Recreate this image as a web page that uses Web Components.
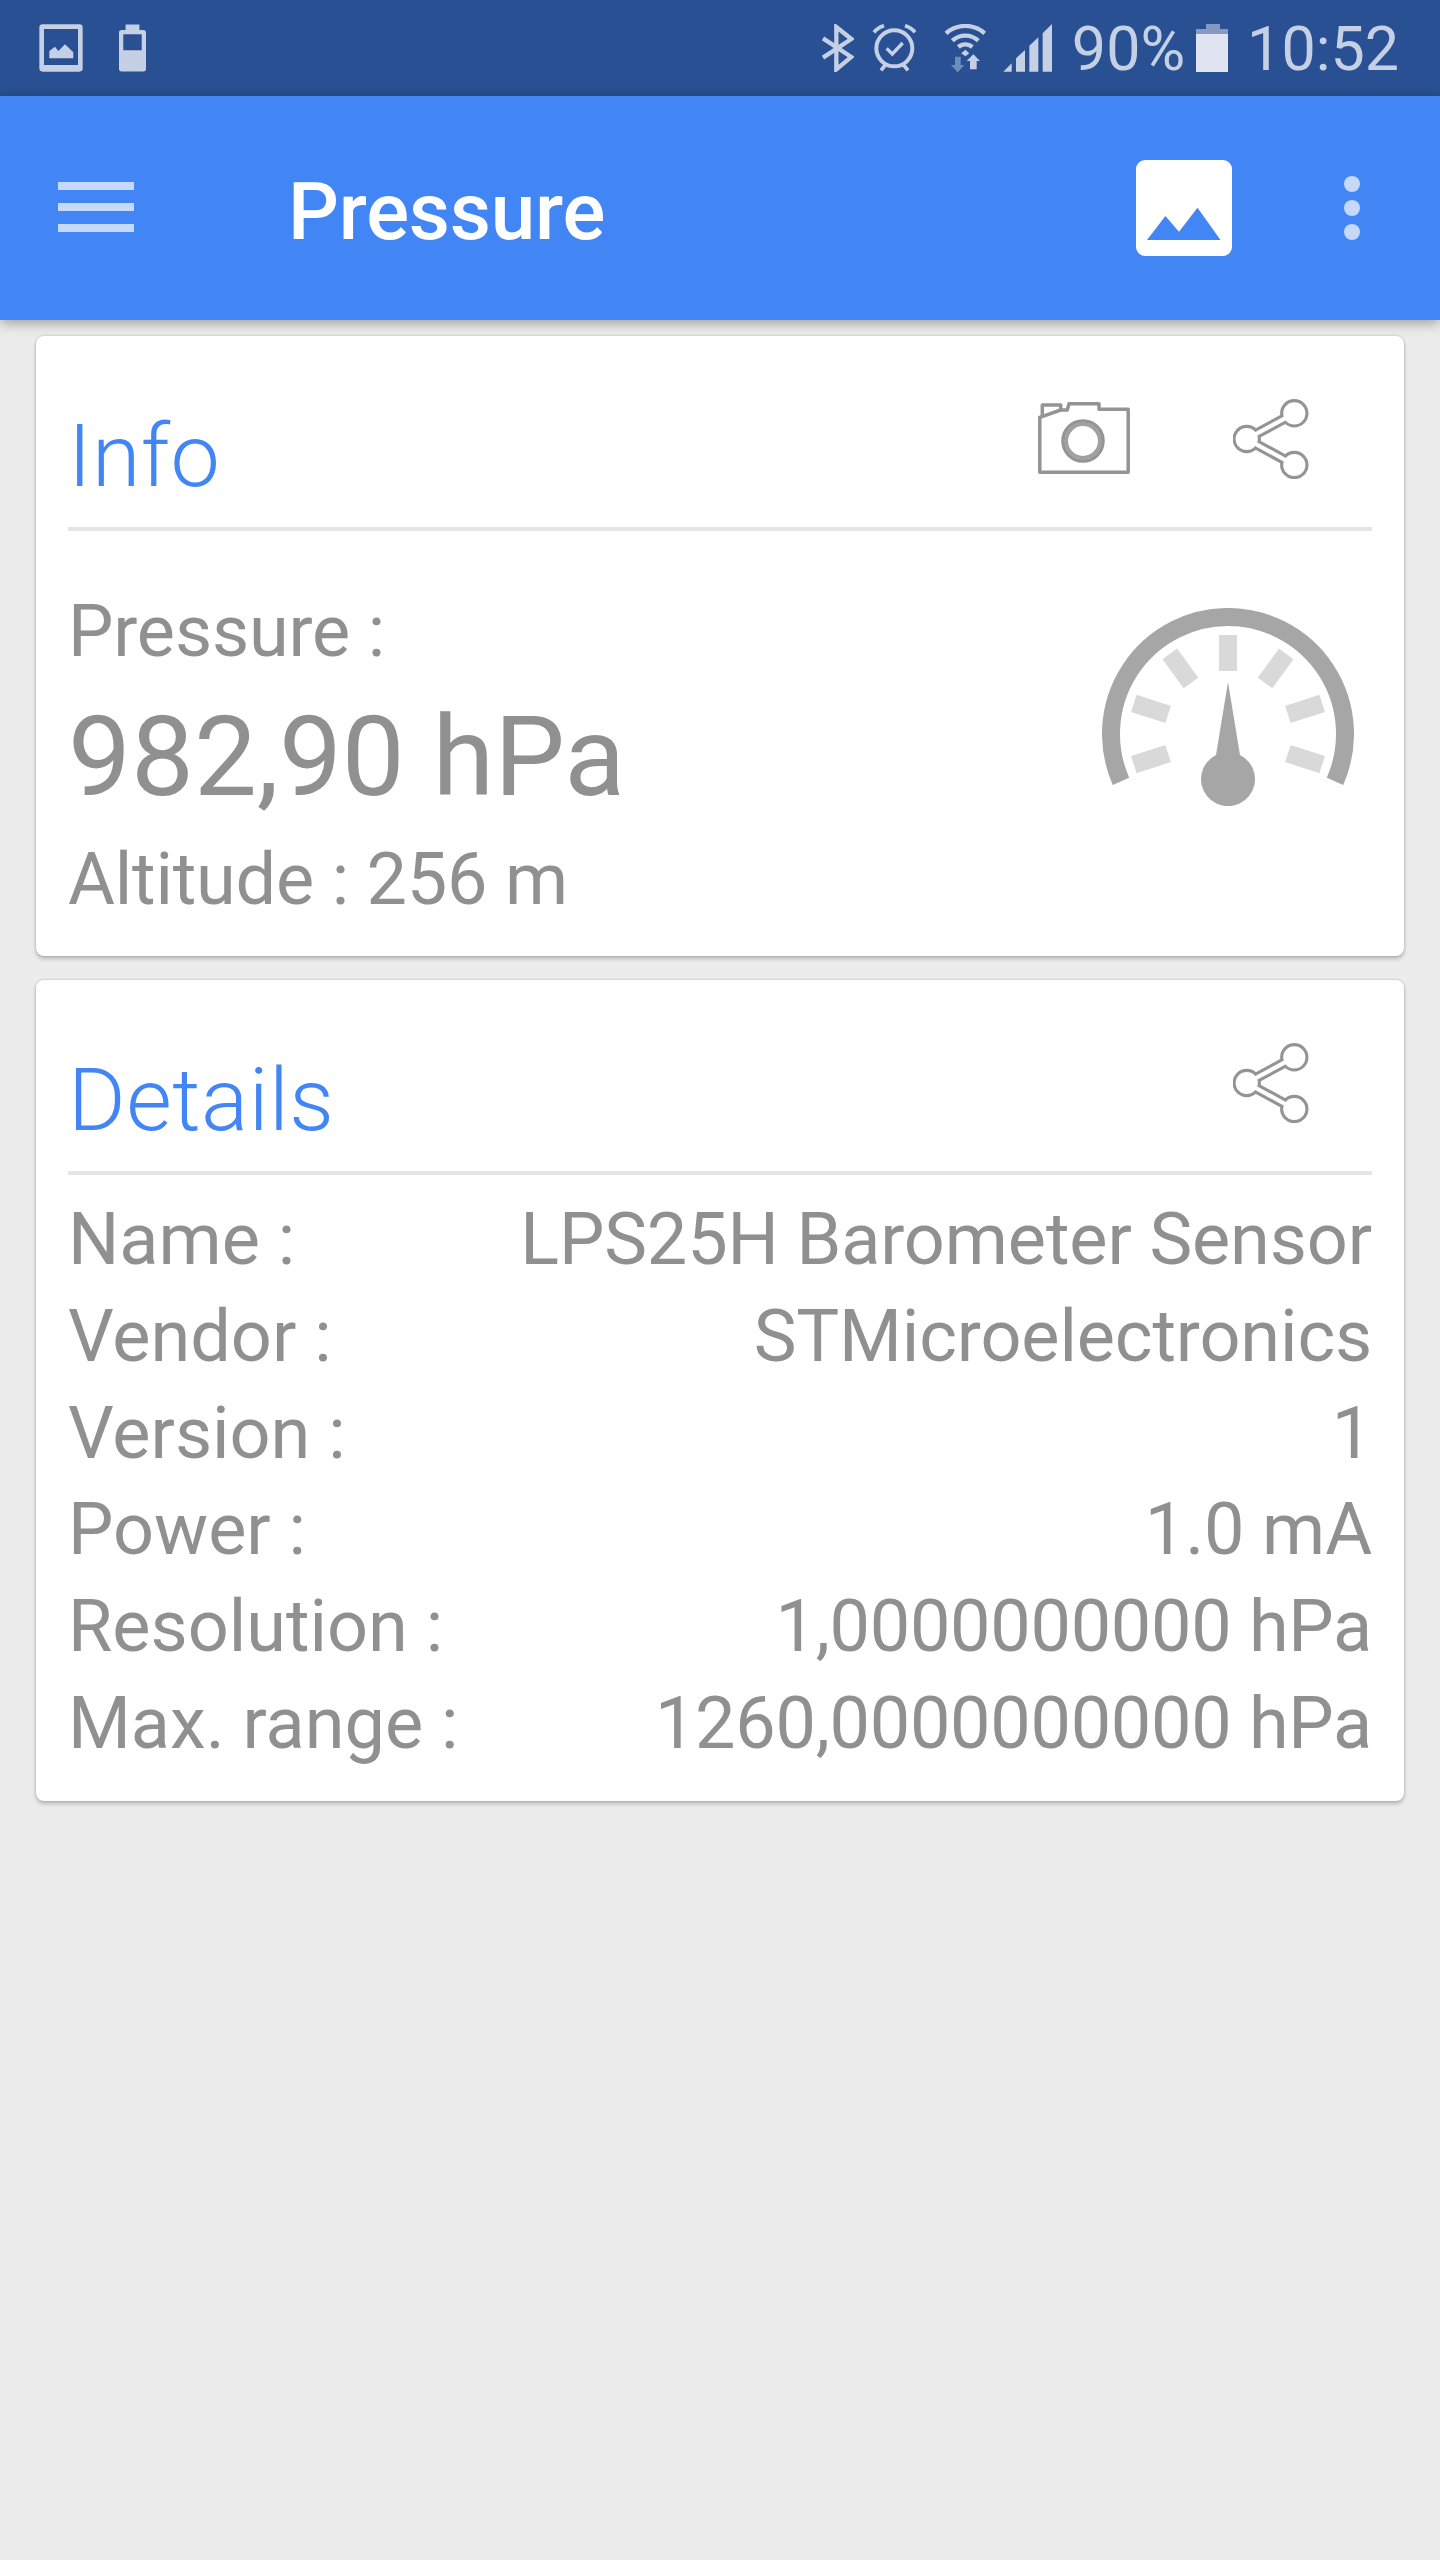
<!DOCTYPE html>
<html>
<head>
<meta charset="utf-8">
<title>Pressure</title>
<style>
    html, body { margin: 0; padding: 0; background: #ececec; }
    body { width: 1440px; height: 2560px; font-family: Roboto, "Liberation Sans", sans-serif; overflow: hidden; }
    main { display: flex; flex-direction: column; gap: 24px; padding: 16px 36px 0; }
</style>
</head>
<body>
<status-bar></status-bar>
<app-bar title="Pressure"></app-bar>
<main>
    <sensor-card title="Info">
        <camera-icon slot="actions"></camera-icon>
        <share-icon slot="actions"></share-icon>
        <pressure-readout label="Pressure :" value="982,90 hPa" altitude="Altitude : 256 m"></pressure-readout>
    </sensor-card>
    <sensor-card title="Details">
        <share-icon slot="actions"></share-icon>
        <detail-list>
            <detail-row label="Name :" value="LPS25H Barometer Sensor"></detail-row>
            <detail-row label="Vendor :" value="STMicroelectronics"></detail-row>
            <detail-row label="Version :" value="1"></detail-row>
            <detail-row label="Power :" value="1.0 mA"></detail-row>
            <detail-row numeric label="Resolution :" value="1,0000000000 hPa"></detail-row>
            <detail-row numeric label="Max. range :" value="1260,0000000000 hPa"></detail-row>
        </detail-list>
    </sensor-card>
</main>

<script>
class StatusBar extends HTMLElement {
    constructor() {
        super();
        this.attachShadow({ mode: "open" }).innerHTML = /*html*/`
            <style>
            :host {
                display: flex;
                align-items: center;
                height: 96px;
                padding: 0 41px 0 39px;
                box-sizing: border-box;
                background: #285093;
                color: #c6d0e4;
                fill: #c6d0e4;
                font-size: 61px;
            }
            svg { display: block; height: 48px; flex: none; }
            .spacer { flex: 1; }
            .txt { line-height: 48px; position: relative; top: 1px; }
            </style>
            <svg style="width:44px; margin-right:36px" viewBox="28 27 130 144">
                <path fill-rule="evenodd" d="M38 28H148Q158 28 158 38V160Q158 170 148 170H38Q28 170 28 160V38Q28 28 38 28ZM42 42V150H144V42ZM58 130V108L75 95L85 108L105 88L130 112V130Z"/>
            </svg>
            <svg style="width:27px" viewBox="268 27 82 144">
                <path fill-rule="evenodd" d="M288 28H330V44H342Q350 44 350 52V162Q350 170 342 170H276Q268 170 268 162V52Q268 44 276 44H288ZM281 57V106H337V57Z"/>
            </svg>
            <div class="spacer"></div>
            <svg style="width:33px; margin-right:18px" viewBox="34 27 99 144">
                <polyline points="40,70 125,126 80,163 80,36 125,72 40,128" fill="none" stroke="#c6d0e4" stroke-width="13"/>
            </svg>
            <svg style="width:44px; margin-right:28px" viewBox="186 27 132 144">
                <g fill="none" stroke="#c6d0e4">
                    <circle cx="253" cy="100" r="54" stroke-width="12"/>
                    <polyline points="230,100 247,117 278,84" stroke-width="10"/>
                    <path d="M192 52Q202 38 222 32M285 32Q305 38 315 52" stroke-width="11"/>
                    <path d="M213 166L226 150M294 166L281 150" stroke-width="11"/>
                </g>
            </svg>
            <svg style="width:43px; margin-right:16px" viewBox="402 27 129 144">
                <g fill="none" stroke="#c6d0e4" stroke-width="13">
                    <path d="M408 55A87 87 0 0 1 524 55"/>
                    <path d="M427 77A58 58 0 0 1 505 77"/>
                    <path d="M445 96A32 32 0 0 1 487 96"/>
                </g>
                <path d="M466 104L478 115L466 124L454 115Z"/>
                <path fill="#6f8dbb" d="M435 125H452V150H463L443 172L423 150H435Z"/>
                <path d="M490 118L510 138H500V163H480V138H470Z"/>
            </svg>
            <svg style="width:49px; margin-right:20px" viewBox="579 27 147 144">
                <path d="M580 170L605 145V170ZM618 170V130L645 105V170ZM658 170V92L685 67V170ZM698 170V55L726 27V170Z"/>
            </svg>
            <span class="txt">90%</span>
            <svg style="width:32px; margin:0 19px 0 11px" viewBox="0 0 32 48">
                <path fill="#8499c4" d="M10 0H24V5H32V10H0V5H10Z"/>
                <rect fill="#dfe4f0" y="10" width="32" height="38"/>
            </svg>
            <span class="txt">10:52</span>
        `;
    }
}
customElements.define("status-bar", StatusBar);

class AppBar extends HTMLElement {
    constructor() {
        super();
        this.attachShadow({ mode: "open" }).innerHTML = /*html*/`
            <style>
            :host {
                display: flex;
                align-items: center;
                position: relative;
                height: 224px;
                padding: 0 80px 0 58px;
                box-sizing: border-box;
                background: #4285f4;
                box-shadow: 0 3px 12px rgba(0,0,0,.34);
            }
            .menu { display: flex; flex-direction: column; gap: 13px; width: 76px; margin-top: -2px; }
            .menu i { display: block; height: 8px; background: #c6d9fb; }
            h1 {
                flex: 1;
                margin: 8px 0 0 154px;
                font: 500 80px Roboto, sans-serif;
                letter-spacing: -0.2px;
                color: #fff;
            }
            .pic { display: block; width: 96px; height: 96px; }
            .more { display: flex; flex-direction: column; gap: 8px; margin-left: 112px; }
            .more i { display: block; width: 16px; height: 16px; border-radius: 50%; background: #c6d9fb; }
            </style>
            <div class="menu"><i></i><i></i><i></i></div>
            <h1></h1>
            <svg class="pic" viewBox="0 0 96 96">
                <rect width="96" height="96" rx="9" fill="#fff"/>
                <path d="M11 80L29.4 56L43 71.7L61.5 47.7L84.5 80Z" fill="#4285f4"/>
            </svg>
            <div class="more"><i></i><i></i><i></i></div>
        `;
        this.shadowRoot.querySelector("h1").textContent = this.getAttribute("title");
    }
}
customElements.define("app-bar", AppBar);

class SensorCard extends HTMLElement {
    constructor() {
        super();
        this.attachShadow({ mode: "open" }).innerHTML = /*html*/`
            <style>
            :host {
                display: block;
                position: relative;
                padding: 0 32px;
                background: #fff;
                border-radius: 8px;
                box-shadow: 0 3px 4px rgba(0,0,0,.2), 0 0 3px rgba(0,0,0,.2);
                color: #909090;
            }
            header {
                display: flex;
                height: 195px;
                box-sizing: border-box;
                border-bottom: 4px solid #e5e5e5;
                padding-right: 63px;
            }
            h2 {
                flex: 1;
                margin: 0;
                padding-top: 68px;
                font: 300 88px Roboto, sans-serif;
                letter-spacing: 0.5px;
                color: #4285f4;
            }
            .actions { display: flex; gap: 103px; align-items: flex-start; }
            </style>
            <header>
                <h2></h2>
                <div class="actions"><slot name="actions"></slot></div>
            </header>
            <slot></slot>
        `;
        this.shadowRoot.querySelector("h2").textContent = this.getAttribute("title");
    }
}
customElements.define("sensor-card", SensorCard);

class CameraIcon extends HTMLElement {
    constructor() {
        super();
        this.attachShadow({ mode: "open" }).innerHTML = /*html*/`
            <style>
            :host { display: block; margin-top: 66px; }
            svg { display: block; width: 92px; height: 72px; }
            </style>
            <svg viewBox="0 0 92 72" fill="none" stroke="#949494" stroke-width="3.5" stroke-linejoin="round">
                <path d="M1.8 15.3V70.2H90.2V7.3H61V1.8H31L29.3 8H22.7Z"/>
                <path d="M4.3 14V3H22.7V8"/>
                <circle cx="45" cy="39" r="20"/>
                <circle cx="45" cy="39" r="16.7" stroke="#a0a0a0"/>
            </svg>
        `;
    }
}
customElements.define("camera-icon", CameraIcon);

class ShareIcon extends HTMLElement {
    constructor() {
        super();
        this.attachShadow({ mode: "open" }).innerHTML = /*html*/`
            <style>
            :host { display: block; margin-top: 63px; }
            svg { display: block; width: 76px; height: 80px; }
            </style>
            <svg viewBox="0 0 76 80">
                <g fill="#949494" stroke="#949494" stroke-width="10.4">
                    <path d="M61.3 14.3L13.7 40L61.3 66" fill="none"/>
                    <circle cx="61.3" cy="14.3" r="9"/>
                    <circle cx="13.7" cy="40" r="9"/>
                    <circle cx="61.3" cy="66" r="9"/>
                </g>
                <g fill="#fff" stroke="#fff" stroke-width="4.2">
                    <path d="M61.3 14.3L13.7 40L61.3 66" fill="none"/>
                    <circle cx="61.3" cy="14.3" r="9"/>
                    <circle cx="13.7" cy="40" r="9"/>
                    <circle cx="61.3" cy="66" r="9"/>
                </g>
            </svg>
        `;
    }
}
customElements.define("share-icon", ShareIcon);

class PressureGauge extends HTMLElement {
    constructor() {
        super();
        let ticks = [-108, -72, -36, 0, 36, 72, 108]
            .map(a => `<rect x="117" y="27" width="18" height="36" transform="rotate(${a} 126 126)"/>`)
            .join("");
        this.attachShadow({ mode: "open" }).innerHTML = /*html*/`
            <style>
            :host { display: block; }
            svg { display: block; width: 252px; height: 198px; }
            </style>
            <svg viewBox="0 0 252 198">
                <path d="M19 173.3A117 117 0 1 1 233 173.3" fill="none" stroke="#a6a6a6" stroke-width="18"/>
                <g fill="#d9d9d9">${ticks}</g>
                <path d="M126 74L138 147A27 27 0 1 1 114 147Z" fill="#a6a6a6"/>
            </svg>
        `;
    }
}
customElements.define("pressure-gauge", PressureGauge);

class PressureReadout extends HTMLElement {
    constructor() {
        super();
        this.attachShadow({ mode: "open" }).innerHTML = /*html*/`
            <style>
            :host {
                display: flex;
                justify-content: space-between;
                height: 425px;
                font: 400 72px Roboto, sans-serif;
            }
            .text { padding-top: 59px; }
            .label, .alt { line-height: 84px; }
            .label { letter-spacing: -0.15px; }
            .alt { letter-spacing: -0.2px; }
            .value { font-size: 112px; line-height: 131px; margin: 17px 0 16px; }
            pressure-gauge { margin: 77px 18px 0 0; }
            </style>
            <div class="text">
                <div class="label"></div>
                <div class="value"></div>
                <div class="alt"></div>
            </div>
            <pressure-gauge></pressure-gauge>
        `;
        this.shadowRoot.querySelector(".label").textContent = this.getAttribute("label");
        this.shadowRoot.querySelector(".value").textContent = this.getAttribute("value");
        this.shadowRoot.querySelector(".alt").textContent = this.getAttribute("altitude");
    }
}
customElements.define("pressure-readout", PressureReadout);

class DetailList extends HTMLElement {
    constructor() {
        super();
        this.attachShadow({ mode: "open" }).innerHTML = /*html*/`
            <style>
            :host { display: block; padding: 17px 0 28px; }
            </style>
            <slot></slot>
        `;
    }
}
customElements.define("detail-list", DetailList);

class DetailRow extends HTMLElement {
    constructor() {
        super();
        this.attachShadow({ mode: "open" }).innerHTML = /*html*/`
            <style>
            :host {
                display: flex;
                justify-content: space-between;
                font: 400 72px/96.8px Roboto, sans-serif;
            }
            .v { letter-spacing: -0.12px; }
            :host([numeric]) .v { letter-spacing: -0.28px; }
            </style>
            <span class="k"></span><span class="v"></span>
        `;
        this.shadowRoot.querySelector(".k").textContent = this.getAttribute("label");
        this.shadowRoot.querySelector(".v").textContent = this.getAttribute("value");
    }
}
customElements.define("detail-row", DetailRow);
</script>
</body>
</html>
